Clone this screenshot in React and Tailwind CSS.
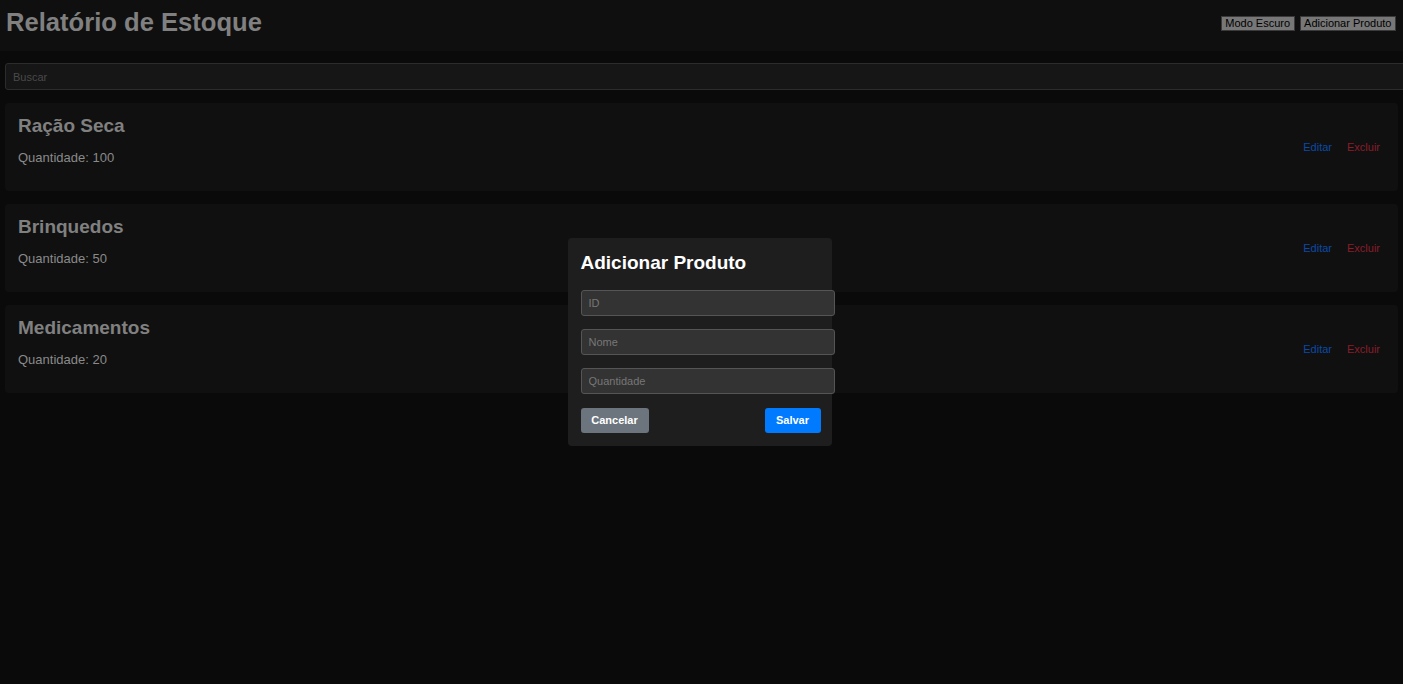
import { useState } from 'react'

const produtos = [
  { id: 1, nome: 'Ração Seca', quantidade: 100 },
  { id: 2, nome: 'Brinquedos', quantidade: 50 },
  { id: 3, nome: 'Medicamentos', quantidade: 20 },
]

export default function App() {
  const [busca, setBusca] = useState('')
  const [modalAberto, setModalAberto] = useState(true)

  const lista = produtos.filter((p) => p.nome.toLowerCase().includes(busca.toLowerCase()))

  return (
    <div className="min-h-[684px] overflow-hidden bg-[#0a0a0a] font-['Liberation_Sans',Arial,sans-serif]">
      <header className="flex h-[51px] items-center justify-between bg-[#0f0f0f] pl-[6px] pr-[7px]">
        <h1 className="mb-[6px] text-[25.6px] font-bold text-[#808080]">Relatório de Estoque</h1>
        <div className="mb-[4px] flex gap-[5px]">
          <button className="h-[15px] border border-[#3a3a3a] bg-[#777] px-[3.5px] text-[11px] leading-none text-black">
            Modo Escuro
          </button>
          <button
            onClick={() => setModalAberto(true)}
            className="h-[15px] border border-[#3a3a3a] bg-[#777] px-[3.5px] text-[11px] leading-none text-black"
          >
            Adicionar Produto
          </button>
        </div>
      </header>

      <div className="px-[5px] pt-[12px]">
        <input
          value={busca}
          onChange={(e) => setBusca(e.target.value)}
          placeholder="Buscar"
          className="h-[27px] w-[1410px] rounded-[3px] border border-[#2c2c2c] bg-[#161616] px-[7px] text-[11px] text-[#999] placeholder-[#4a4a4a] outline-none"
        />

        <div className="mt-[13px] flex flex-col gap-[13px]">
          {lista.map((p) => (
            <div
              key={p.id}
              className="flex h-[88px] items-start justify-between rounded-[4px] bg-[#101010] pl-[13px] pr-[18px] pt-[11px]"
            >
              <div>
                <h2 className="text-[19px] font-bold leading-[24px] text-[#808080]">{p.nome}</h2>
                <p className="mt-[12px] text-[13px] leading-[16px] text-[#8a8a8a]">Quantidade: {p.quantidade}</p>
              </div>
              <div className="mt-[26px] flex gap-[15px] text-[11px] leading-[14px]">
                <button className="text-[#0b4aa6]">Editar</button>
                <button className="text-[#8a1d2a]">Excluir</button>
              </div>
            </div>
          ))}
        </div>
      </div>

      {modalAberto && (
        <div className="fixed inset-0 flex items-center justify-center">
          <div className="mr-[4px] w-[264px] rounded-[4px] bg-[#1e1e1e] p-[13px]">
            <h2 className="text-[19px] font-bold leading-[24px] text-white">Adicionar Produto</h2>
            <div className="mt-[15px] flex flex-col gap-[13px]">
              {['ID', 'Nome', 'Quantidade'].map((ph) => (
                <input
                  key={ph}
                  placeholder={ph}
                  className="h-[26px] w-[254px] rounded-[3px] border border-[#555] bg-[#333] px-[7px] text-[11px] text-white placeholder-[#777] outline-none"
                />
              ))}
            </div>
            <div className="mt-[14px] flex justify-between">
              <button
                onClick={() => setModalAberto(false)}
                className="h-[25px] w-[68px] rounded-[3px] bg-[#6c757d] text-[11px] font-bold text-white"
              >
                Cancelar
              </button>
              <button className="mr-[-2px] h-[25px] w-[56px] rounded-[3px] bg-[#007bff] text-[11px] font-bold text-white">
                Salvar
              </button>
            </div>
          </div>
        </div>
      )}
    </div>
  )
}
